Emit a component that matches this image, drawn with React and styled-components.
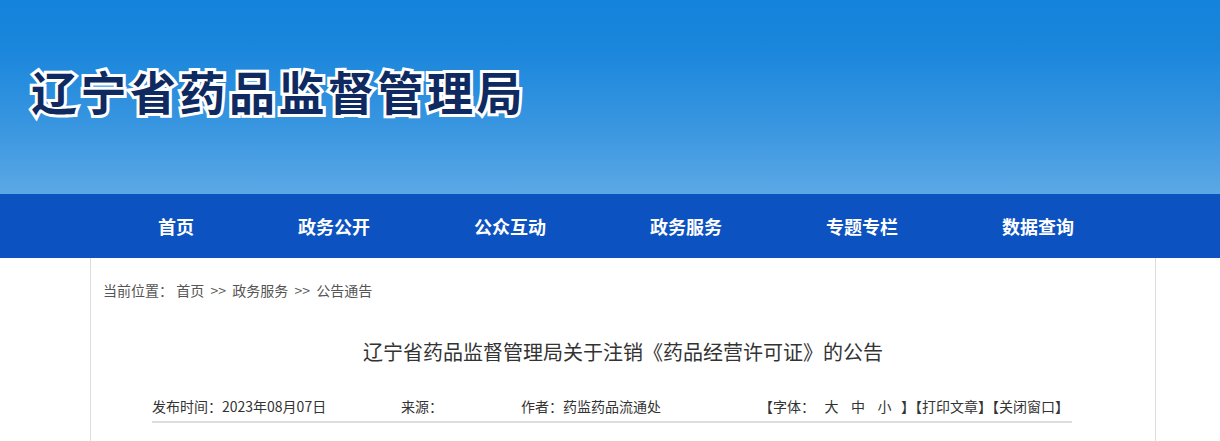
import React from 'react';
import styled, { createGlobalStyle } from 'styled-components';

const GlobalStyle = createGlobalStyle`
  body {
    margin: 0;
    background: #fff;
    font-family: "Noto Sans CJK SC", "Noto Sans", sans-serif;
  }
`;

const Banner = styled.header`
  height: 194px;
  background: linear-gradient(180deg, #1483db 0%, #1a86dc 25%, #3996e0 65%, #5ca8e5 100%);
  display: flex;
  align-items: center;
  padding-left: 31px;
  padding-bottom: 14px;
  box-sizing: border-box;
`;

const SiteName = styled.h1`
  margin: 0;
  font-size: 46px;
  font-weight: 700;
  letter-spacing: 3.5px;
  color: #0e2a60;
  -webkit-text-stroke: 6px #fff;
  paint-order: stroke fill;
  line-height: 1;
`;

const NavBar = styled.nav`
  height: 64px;
  background: #0d52c1;
  display: flex;
  align-items: center;
  padding-left: 106px;
`;

const NavItem = styled.a`
  width: ${(p) => (p.$first ? 140 : 176)}px;
  text-align: center;
  color: #fff;
  font-size: 18px;
  font-weight: 700;
  text-decoration: none;
  cursor: pointer;
`;

const Main = styled.main`
  margin-left: 90px;
  width: 1064px;
  min-height: 200px;
  border-left: 1px solid #ddd;
  border-right: 1px solid #ddd;
  padding-top: 22px;
`;

const Crumbs = styled.div`
  padding-left: 12px;
  font-size: 14px;
  line-height: 20px;
  color: #555;
  white-space: pre;
`;

const Title = styled.h2`
  margin: 38px 0 0;
  text-align: center;
  font-size: 20px;
  font-weight: 400;
  line-height: 28px;
  color: #333;
`;

const InfoRow = styled.div`
  margin: 30px 0 0 61px;
  width: 920px;
  display: flex;
  align-items: center;
  font-size: 14px;
  line-height: 20px;
  color: #333;
  padding-bottom: 5px;
  border-bottom: 2px solid #ddd;
`;

const InfoCell = styled.span`
  width: ${(p) => p.$w}px;
  flex-shrink: 0;
`;

const Tools = styled.span`
  margin-left: auto;
  padding-right: 3px;
  white-space: pre;
`;

const navItems = ['首页', '政务公开', '公众互动', '政务服务', '专题专栏', '数据查询'];

export default function App() {
  return (
    <>
      <GlobalStyle />
      <Banner>
        <SiteName>辽宁省药品监督管理局</SiteName>
      </Banner>
      <NavBar>
        {navItems.map((item, i) => (
          <NavItem key={item} $first={i === 0}>{item}</NavItem>
        ))}
      </NavBar>
      <Main>
        <Crumbs>当前位置： 首页  &gt;&gt;  政务服务  &gt;&gt;  公告通告</Crumbs>
        <Title>辽宁省药品监督管理局关于注销《药品经营许可证》的公告</Title>
        <InfoRow>
          <InfoCell $w={249}>发布时间：2023年08月07日</InfoCell>
          <InfoCell $w={120}>来源：</InfoCell>
          <InfoCell $w={200}>作者：药监药品流通处</InfoCell>
          <Tools>【字体：   大    中    小   】【打印文章】【关闭窗口】</Tools>
        </InfoRow>
      </Main>
    </>
  );
}
